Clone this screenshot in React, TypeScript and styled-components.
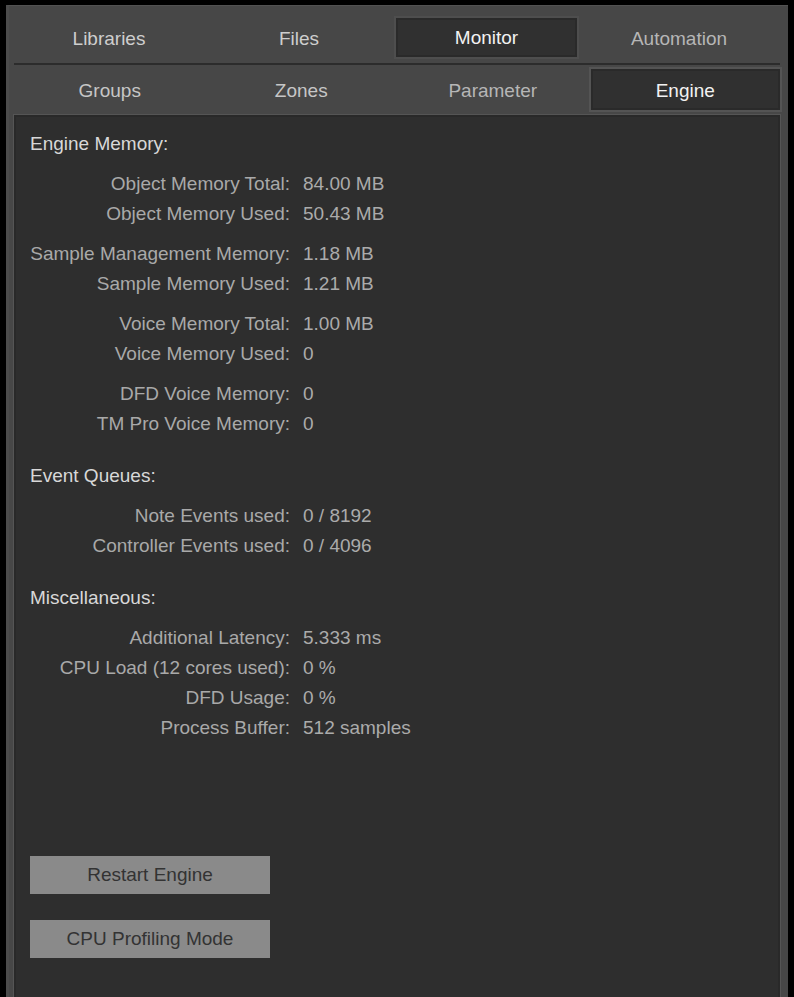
import styled, { createGlobalStyle } from "styled-components"

const GlobalStyle = createGlobalStyle`
    html, body {
        margin: 0;
        padding: 0;
        background: #000;
    }
    body {
        font-family: "Liberation Sans", Arial, sans-serif;
        font-size: 19px;
    }
`

type Row = { label: string; value: string }
type Section = { title: string; groups: Row[][] }

const sections: Section[] = [
    {
        title: "Engine Memory:",
        groups: [
            [
                { label: "Object Memory Total:", value: "84.00 MB" },
                { label: "Object Memory Used:", value: "50.43 MB" },
            ],
            [
                { label: "Sample Management Memory:", value: "1.18 MB" },
                { label: "Sample Memory Used:", value: "1.21 MB" },
            ],
            [
                { label: "Voice Memory Total:", value: "1.00 MB" },
                { label: "Voice Memory Used:", value: "0" },
            ],
            [
                { label: "DFD Voice Memory:", value: "0" },
                { label: "TM Pro Voice Memory:", value: "0" },
            ],
        ],
    },
    {
        title: "Event Queues:",
        groups: [
            [
                { label: "Note Events used:", value: "0 / 8192" },
                { label: "Controller Events used:", value: "0 / 4096" },
            ],
        ],
    },
    {
        title: "Miscellaneous:",
        groups: [
            [
                { label: "Additional Latency:", value: "5.333 ms" },
                { label: "CPU Load (12 cores used):", value: "0 %" },
                { label: "DFD Usage:", value: "0 %" },
                { label: "Process Buffer:", value: "512 samples" },
            ],
        ],
    },
]

const mainTabs = ["Libraries", "Files", "Monitor", "Automation"]
const subTabs = ["Groups", "Zones", "Parameter", "Engine"]

export default function App() {
    return (
        <>
            <GlobalStyle />
            <Panel>
                <MainTabBar>
                    {mainTabs.map((t) => (
                        <MainTab key={t} $active={t === "Monitor"} $dim={t === "Automation"}>{t}</MainTab>
                    ))}
                </MainTabBar>
                <SubTabBar>
                    {subTabs.map((t) => (
                        <SubTab key={t} $active={t === "Engine"} $dim={t === "Parameter"}>{t}</SubTab>
                    ))}
                </SubTabBar>
                <Content>
                    {sections.map((s, i) => (
                        <SectionBlock key={s.title} $first={i === 0}>
                            <SectionTitle>{s.title}</SectionTitle>
                            {s.groups.map((g, gi) => (
                                <Group key={gi}>
                                    {g.map((r) => (
                                        <InfoRow key={r.label}>
                                            <Label>{r.label}</Label>
                                            <Value>{r.value}</Value>
                                        </InfoRow>
                                    ))}
                                </Group>
                            ))}
                        </SectionBlock>
                    ))}
                    <Buttons>
                        <Button>Restart Engine</Button>
                        <Button>CPU Profiling Mode</Button>
                    </Buttons>
                </Content>
            </Panel>
        </>
    )
}

const Panel = styled.div`
    box-sizing: border-box;
    margin: 5px 0 0 6px;
    width: 782px;
    height: 992px;
    background-color: #474747;
    border-top: 1px solid #525252;
    border-left: 3px solid #4c4c4c;
    padding: 0 8px 0 5px;
    display: flex;
    flex-direction: column;
`
const MainTabBar = styled.div`
    display: grid;
    grid-template-columns: repeat(4, 1fr);
    height: 57px;
    padding-right: 6px;
    border-bottom: 2px solid #2c2c2c;
`
const MainTab = styled.div<{ $active?: boolean; $dim?: boolean }>`
    display: flex;
    align-items: center;
    justify-content: center;
    color: ${(p) => (p.$active ? "#f2f2f2" : p.$dim ? "#b6b6b6" : "#cecece")};
    background-color: ${(p) => (p.$active ? "#303030" : "transparent")};
    border: 2px solid ${(p) => (p.$active ? "#2a2a2a" : "transparent")};
    box-shadow: ${(p) => (p.$active ? "0 0 0 2px #4e4e4e" : "none")};
    margin: ${(p) => (p.$active ? "12px 7px 6px 2px" : "0")};
    padding-top: ${(p) => (p.$active ? "0" : "8px")};
`
const SubTabBar = styled.div`
    display: grid;
    grid-template-columns: repeat(4, 1fr);
    height: 49px;
`
const SubTab = styled.div<{ $active?: boolean; $dim?: boolean }>`
    display: flex;
    align-items: center;
    justify-content: center;
    color: ${(p) => (p.$active ? "#f2f2f2" : p.$dim ? "#b6b6b6" : "#c6c6c6")};
    background-color: ${(p) => (p.$active ? "#303030" : "transparent")};
    border: 2px solid ${(p) => (p.$active ? "#2a2a2a" : "transparent")};
    box-shadow: ${(p) => (p.$active ? "0 0 0 2px #545454" : "none")};
    margin: ${(p) => (p.$active ? "4px 0 4px 2px" : "0")};
    padding-top: ${(p) => (p.$active ? "2px" : "3px")};
`
const Content = styled.div`
    flex: 1;
    display: flex;
    flex-direction: column;
    background-color: #2e2e2e;
    border: 2px solid #292929;
    border-bottom: none;
    box-shadow: 0 0 0 1px #555555;
    margin-top: 1px;
    padding: 12px 0 0 13px;
`
const SectionBlock = styled.div<{ $first?: boolean }>`
    margin-top: ${(p) => (p.$first ? "0" : "22px")};
`
const SectionTitle = styled.div`
    height: 30px;
    line-height: 30px;
    color: #d8d8d8;
    padding-left: 1px;
`
const Group = styled.div`
    margin-top: 10px;
`
const InfoRow = styled.div`
    display: grid;
    grid-template-columns: 261px auto;
    column-gap: 13px;
    height: 30px;
    line-height: 30px;
    white-space: nowrap;
`
const Label = styled.span`
    text-align: right;
    color: #a9a9a9;
`
const Value = styled.span`
    color: #ababab;
`
const Buttons = styled.div`
    display: flex;
    flex-direction: column;
    gap: 26px;
    margin-top: 113px;
    padding-left: 1px;
`
const Button = styled.button`
    width: 240px;
    height: 38px;
    border: none;
    background-color: #8a8a8a;
    color: #333333;
    font-family: "Liberation Sans", Arial, sans-serif;
    font-size: 19px;
    padding: 0;
    cursor: pointer;
`
